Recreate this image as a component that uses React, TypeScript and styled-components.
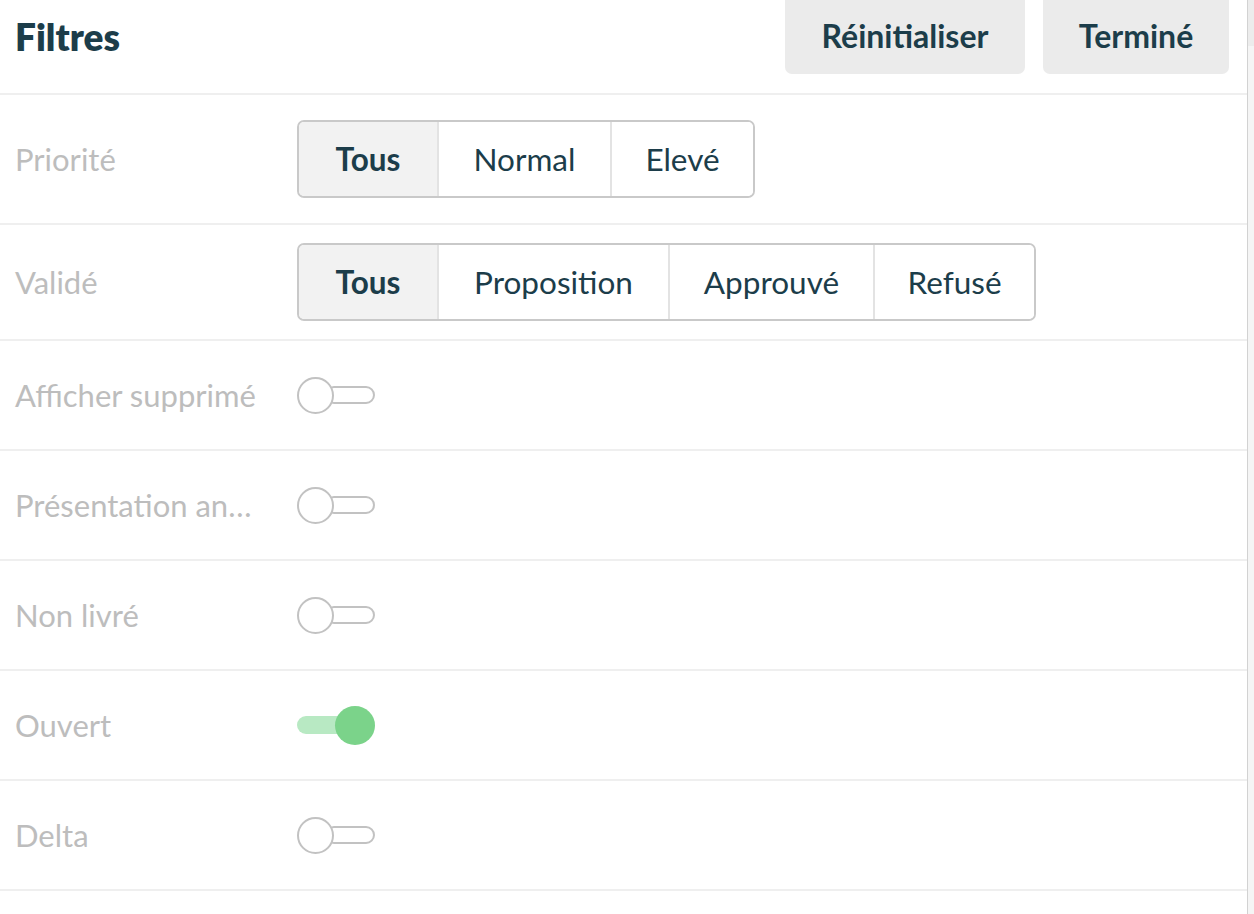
import { useState } from 'react';
import styled, { createGlobalStyle } from 'styled-components';

const GlobalStyle = createGlobalStyle`
  body {
    margin: 0;
    background: #ffffff;
    font-family: Lato, "Noto Sans", sans-serif;
  }
`;

const Page = styled.div`
  display: flex;
  height: 914px;
  overflow: hidden;
`;

const Panel = styled.div`
  flex: 1;
  display: flex;
  flex-direction: column;
`;

const Scrollbar = styled.div`
  width: 6px;
  border-left: 1px solid #d2d2d2;
  background: #f5f5f5;
  display: flex;
  flex-direction: column;
`;

const Thumb = styled.div`
  height: 46px;
  background: #ececec;
`;

const Header = styled.div`
  height: 93px;
  display: flex;
  align-items: flex-start;
  justify-content: space-between;
  padding: 0 18px 0 15px;
  border-bottom: 2px solid #efefef;
`;

const Title = styled.h1`
  margin: 14px 0 0;
  font-size: 37px;
  font-weight: 800;
  color: #1c3d4a;
`;

const Actions = styled.div`
  display: flex;
  gap: 18px;
`;

const ActionButton = styled.button<{ w: number }>`
  width: ${p => p.w}px;
  height: 82px;
  margin-top: -8px;
  padding-top: 6px;
  border: none;
  border-radius: 7px;
  background: #ebebeb;
  color: #1c3d4a;
  font-family: Lato, "Noto Sans", sans-serif;
  font-size: 32px;
  font-weight: 700;
`;

const Row = styled.div<{ h: number }>`
  height: ${p => p.h}px;
  display: flex;
  align-items: center;
  padding-left: 15px;
  border-bottom: 2px solid #efefef;
`;

const Label = styled.div`
  width: 282px;
  font-size: 31px;
  color: #bdbdbd;
  white-space: nowrap;
  padding-right: 16px;
  box-sizing: border-box;
`;

const Segmented = styled.div`
  display: flex;
  border: 2px solid #c9c9c9;
  border-radius: 7px;
  overflow: hidden;
  height: 74px;
`;

const Segment = styled.button<{ active: boolean; w: number }>`
  width: ${p => p.w}px;
  border: none;
  border-left: 2px solid #e3e3e3;
  background: ${p => (p.active ? '#f2f2f2' : '#ffffff')};
  color: #1c3d4a;
  font-family: Lato, "Noto Sans", sans-serif;
  font-size: 31.5px;
  font-weight: ${p => (p.active ? 700 : 400)};
  padding: 0;
  &:first-child {
    border-left: none;
  }
`;

const Toggle = styled.div`
  position: relative;
  width: 78px;
  height: 40px;
  cursor: pointer;
`;

const Track = styled.div<{ on: boolean }>`
  position: absolute;
  top: 11px;
  height: 18px;
  box-sizing: border-box;
  border-radius: 9px;
  ${p =>
    p.on
      ? `left: 0; right: 20px; background: #b8e9c3;`
      : `left: 28px; right: 0; border: 2px solid #c2c2c2; background: #fff;`}
`;

const Knob = styled.div<{ on: boolean }>`
  position: absolute;
  box-sizing: border-box;
  border-radius: 50%;
  ${p =>
    p.on
      ? `top: 1px; left: 38px; width: 40px; height: 39px; background: #7bd38a;`
      : `top: 2px; left: 0; width: 37px; height: 37px; border: 2px solid #c2c2c2; background: #fff;`}
`;

type SegProps = { options: { label: string; w: number }[] };

function SegmentGroup({ options }: SegProps) {
  const [value, setValue] = useState(options[0].label);
  return (
    <Segmented>
      {options.map(o => (
        <Segment key={o.label} w={o.w} active={value === o.label} onClick={() => setValue(o.label)}>
          {o.label}
        </Segment>
      ))}
    </Segmented>
  );
}

function Switch({ initial }: { initial: boolean }) {
  const [on, setOn] = useState(initial);
  return (
    <Toggle onClick={() => setOn(!on)}>
      <Track on={on} />
      <Knob on={on} />
    </Toggle>
  );
}

// label already shortened the way the panel shows it
const switches = [
  { label: 'Afficher supprimé', on: false },
  { label: 'Présentation an…', on: false },
  { label: 'Non livré', on: false },
  { label: 'Ouvert', on: true },
  { label: 'Delta', on: false },
];

export default function App() {
  return (
    <Page>
      <GlobalStyle />
      <Panel>
        <Header>
          <Title>Filtres</Title>
          <Actions>
            <ActionButton w={240}>Réinitialiser</ActionButton>
            <ActionButton w={186}>Terminé</ActionButton>
          </Actions>
        </Header>
        <Row h={128}>
          <Label>Priorité</Label>
          <SegmentGroup
            options={[
              { label: 'Tous', w: 138 },
              { label: 'Normal', w: 173 },
              { label: 'Elevé', w: 143 },
            ]}
          />
        </Row>
        <Row h={114}>
          <Label>Validé</Label>
          <SegmentGroup
            options={[
              { label: 'Tous', w: 138 },
              { label: 'Proposition', w: 231 },
              { label: 'Approuvé', w: 205 },
              { label: 'Refusé', w: 161 },
            ]}
          />
        </Row>
        {switches.map(s => (
          <Row h={108} key={s.label}>
            <Label>{s.label}</Label>
            <Switch initial={s.on} />
          </Row>
        ))}
      </Panel>
      <Scrollbar>
        <Thumb />
      </Scrollbar>
    </Page>
  );
}
